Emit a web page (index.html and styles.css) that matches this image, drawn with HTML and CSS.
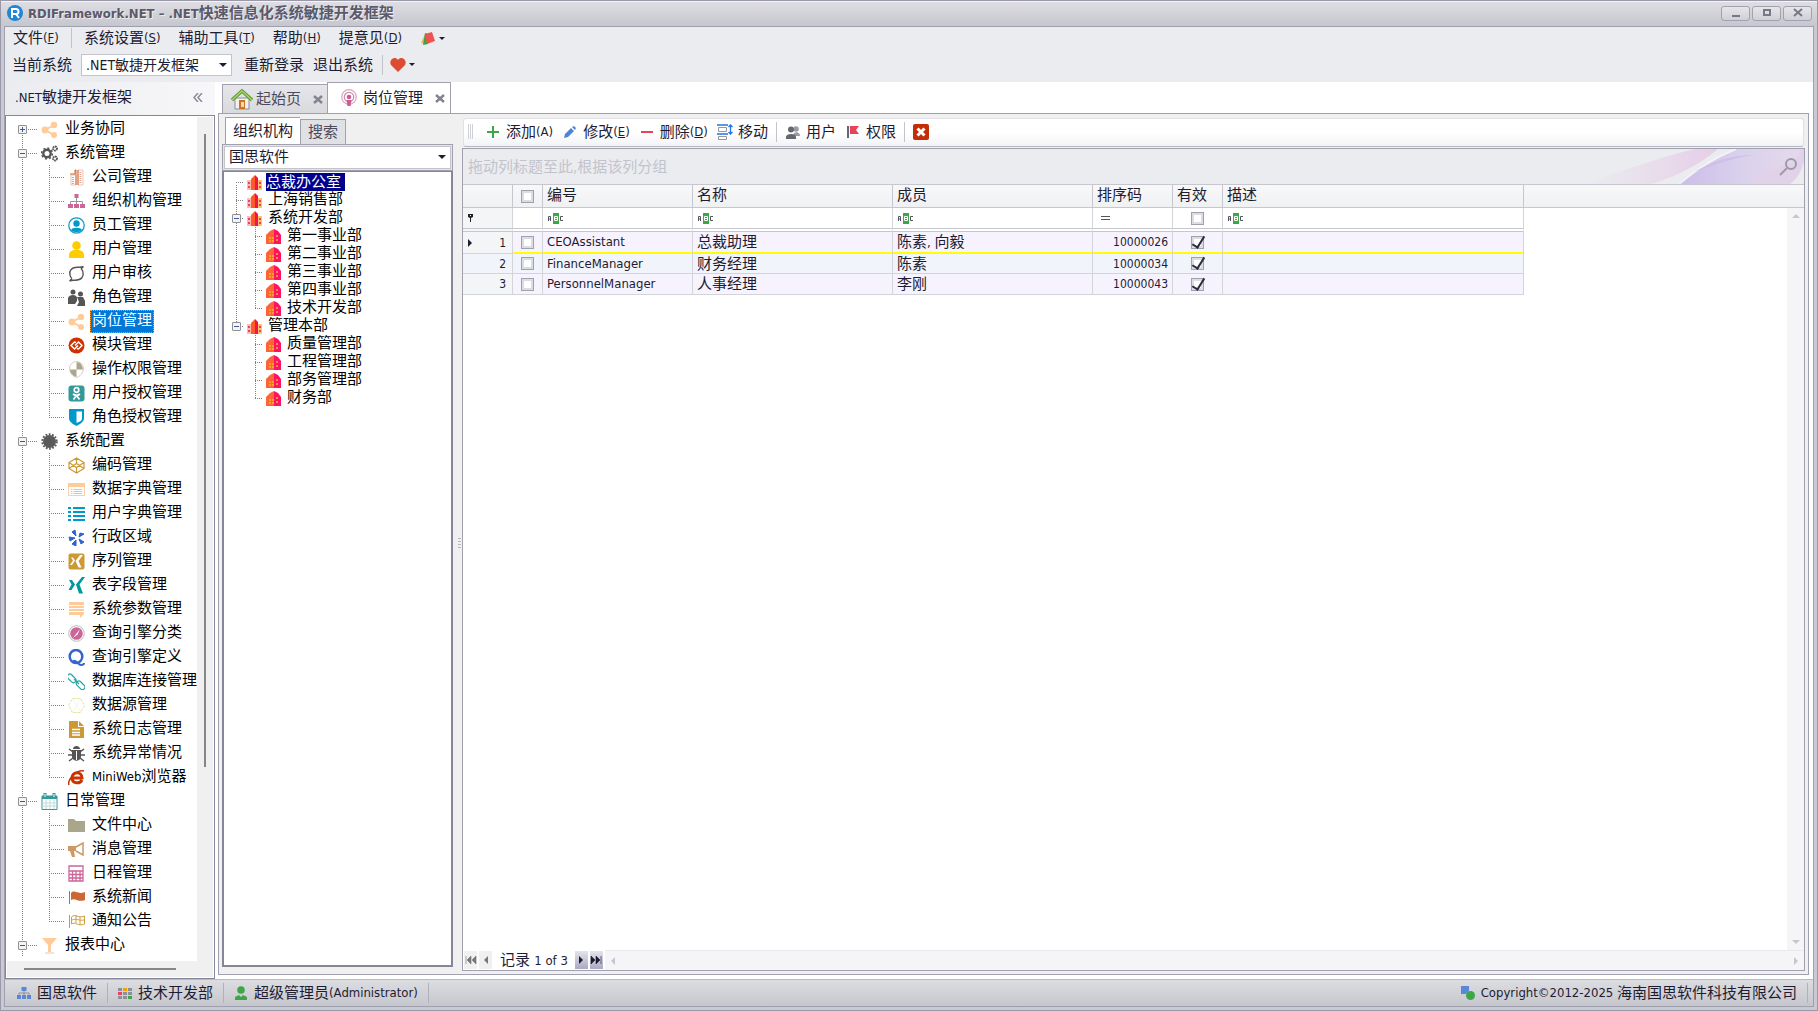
FILE: index.html
```
<!DOCTYPE html>
<html lang="zh-CN">
  <head>
    <meta charset="UTF-8" />
    <meta name="viewport" content="width=device-width, initial-scale=1.0" />
    <title>RDIFramework.NET - .NET快速信息化系统敏捷开发框架</title>
    <link rel="stylesheet" href="styles.css">
  </head>
  <body>
    <svg class="defs" aria-hidden="true">
      <symbol id="share" viewBox="0 0 17 17"><path d="M13 4 4 9l9 5" fill="none" stroke="#ffcb99" stroke-width="2"/><circle cx="13" cy="4" r="3.2" fill="#ffcb99"/><circle cx="4" cy="9" r="3.4" fill="#ffcb99"/><circle cx="13" cy="14" r="3" fill="#ffcb99"/></symbol>
      <symbol id="towers" viewBox="0 0 15 15"><path d="M0 5h4v10H0z" fill="#ffb9b4"/><path d="M4 4l4-4v15H4z" fill="#ff5a2c"/><path d="M8 0l3 3v12H8z" fill="#f0144b"/><path d="M11 5h4v10h-4z" fill="#ffc46b"/><path d="M2 7v2m0 2v2M13 7v2m0 2v2" stroke="#f0144b" stroke-width="1.500"/></symbol>
      <symbol id="house" viewBox="0 0 15 15"><path d="M0 6l4-4 4-2v15H0z" fill="#ff6434"/><path d="M8 0l4 2 3 4v9H8z" fill="#ff1262"/><path d="M4 8v2m3-2v2M4 11v2m3-2v2m4-7v2m0 2v2" stroke="#ffb02d" stroke-width="1.6"/></symbol>
      <symbol id="abc" viewBox="0 0 16 11"><path d="M5 0h6v11H5z" fill="#3fa648"/><path d="M.5 8V3.500h2V8m-2-2h2" fill="none" stroke="#555560"/><path d="M6.500 3.500h3v4h-3zm0 2h3" fill="none" stroke="#fff"/><path d="M15 3.500h-2.500v4H15" fill="none" stroke="#555560"/></symbol>
      <symbol id="cross" viewBox="0 0 10 9"><path d="M1 1l8 7M9 1 1 8" stroke="#83848f" stroke-width="2.500"/></symbol>
    </svg>

    <div class="window">
      <header class="titlebar">
        <svg class="logo" viewBox="0 0 16 16"><circle cx="8" cy="8" r="8" fill="#1f86d8"/><path d="M5 13V4h4a2.500 2.500 0 010 5H6m3 0 3 4" fill="none" stroke="#fff" stroke-width="2"/></svg>
        <h1><span class="en">RDIFramework.NET – .NET</span>快速信息化系统敏捷开发框架</h1>
        <div class="win-buttons">
          <button aria-label="最小化"><svg viewBox="0 0 12 10"><path d="M2 8h8" stroke="#777885" stroke-width="2"/></svg></button>
          <button aria-label="最大化"><svg viewBox="0 0 12 10"><path d="M3 2h6v5H3z" fill="none" stroke="#777885" stroke-width="2"/></svg></button>
          <button aria-label="关闭"><svg viewBox="0 0 12 10"><path d="M2 1l8 7M10 1 2 8" stroke="#777885" stroke-width="2"/></svg></button>
        </div>
      </header>

      <div class="client">
        <nav class="menubar">
          <button>文件<span class="en">(<u>F</u>)</span></button>
          <i class="sep"></i>
          <button>系统设置<span class="en">(<u>S</u>)</span></button>
          <button>辅助工具<span class="en">(<u>T</u>)</span></button>
          <button>帮助<span class="en">(<u>H</u>)</span></button>
          <button>提意见<span class="en">(<u>D</u>)</span></button>
          <button class="drop" aria-label="皮肤"><svg class="i16" viewBox="0 0 16 16"><path d="M5 4 1 13l5 1z" fill="#f2b84b"/><path d="M5 3l3 1v10l-5 1z" fill="#37a64a"/><path d="M5 4l7-2 3 9-8 3z" fill="#ef5350"/></svg><i class="caret"></i></button>
        </nav>

        <div class="systembar">
          <label for="system">当前系统</label>
          <span class="combo"><select id="system"><option>.NET敏捷开发框架</option></select></span>
          <button>重新登录</button>
          <button>退出系统</button>
          <i class="sep"></i>
          <button class="drop" aria-label="收藏"><svg class="i16" viewBox="0 0 16 16"><path d="M8 15 1 8C-1 4 2 1 5 1c1.500 0 2.500 1 3 2 .5-1 1.500-2 3-2 3 0 6 3 4 7z" fill="#dd4b33"/></svg><i class="caret"></i></button>
        </div>

        <div class="main">
          <aside class="sidebar">
            <div class="side-head">
              <h2><span class="en">.NET</span>敏捷开发框架</h2>
              <button aria-label="折叠"><svg viewBox="0 0 10 9"><path d="M5 0 1 4.500 5 9M9 0 5 4.500 9 9" fill="none" stroke="#8a8b98" stroke-width="1.500"/></svg></button>
            </div>
            <div class="side-box">
              <ul class="tree">
                <li>
                  <div class="node"><button class="toggle plus" aria-label="展开"></button><svg><use href="#share"/></svg><a href="#">业务协同</a></div>
                </li>
                <li>
                  <div class="node"><button class="toggle" aria-label="折叠"></button><svg viewBox="0 0 17 17"><circle cx="6" cy="8.500" r="3.700" fill="none" stroke="#555" stroke-width="2.400"/><circle cx="6" cy="8.500" r="5.400" fill="none" stroke="#555" stroke-width="1.500" stroke-dasharray="2 2.200"/><circle cx="14" cy="3.500" r="2" fill="none" stroke="#555" stroke-width="1.800" stroke-dasharray="1.600 .5"/><circle cx="14" cy="13.500" r="2" fill="none" stroke="#555" stroke-width="1.800" stroke-dasharray="1.600 .5"/></svg><a href="#">系统管理</a></div>
                  <ul>
                    <li><svg viewBox="0 0 17 17"><path d="M3 16V6h5v10zM10 1h5v15h-5z" fill="none" stroke="#f1c0b0"/><path d="M2 5h5V1h1v15M10 16V1" fill="none" stroke="#cc6633"/><path d="M5 8v7m7.500-12v12" stroke="#dda58d" stroke-width="2" stroke-dasharray="1 1"/></svg><a href="#">公司管理</a></li>
                    <li><svg viewBox="0 0 17 17"><path d="M8.500 5v6M2.500 11V8.500h12V11" fill="none" stroke="#999"/><path d="M6.500 1h4v4h-4zM0 11h5v4H0zM6 11h5v4H6zM12 11h5v4h-5z" fill="#cc6699"/></svg><a href="#">组织机构管理</a></li>
                    <li><svg viewBox="0 0 17 17"><circle cx="8.500" cy="8.500" r="7.700" fill="none" stroke="#0f9cc9" stroke-width="1.300"/><circle cx="8.500" cy="6.500" r="3.200" fill="#0099cc"/><path d="M3 13c1-3 10-3 11 0-3 3-8 3-11 0z" fill="#0099cc"/></svg><a href="#">员工管理</a></li>
                    <li><svg viewBox="0 0 17 17"><circle cx="8.500" cy="4.500" r="4.300" fill="#fc0"/><path d="M1 17v-3c0-7 15-7 15 0v3z" fill="#fc0"/></svg><a href="#">用户管理</a></li>
                    <li><svg viewBox="0 0 17 17"><path d="M15.500 1.500c-2 1-3 .8-5 .8C3 2 1 6 2 10c.3 2 1.300 3 2 3.500M1.500 16c2-1 3-.8 5-.8 7.500.3 9.500-4 8.500-8-.3-2-1.300-3-2-3.500M15.500 1.500 13 4M1.500 16 4 13.500" fill="none" stroke="#555" stroke-width="1.400"/></svg><a href="#">用户审核</a></li>
                    <li><svg viewBox="0 0 17 17"><circle cx="5" cy="3" r="2.500" fill="#555"/><path d="M0 15V9c1-4 9-4 9 0v3l-2 3z" fill="#555"/><circle cx="12.500" cy="5" r="2.500" fill="#555"/><path d="M9 8h6l2 4v5H9l2-4z" fill="#555"/></svg><a href="#">角色管理</a></li>
                    <li class="selected"><svg><use href="#share"/></svg><a href="#">岗位管理</a></li>
                    <li><svg viewBox="0 0 17 17"><circle cx="8.500" cy="8.500" r="8" fill="#cc3300"/><path d="M8 5.500 6.500 5 3 8.500 6.500 12 10 8.500M9 11.500l1.500.5L14 8.500 10.500 5 7 8.500" fill="none" stroke="#fff" stroke-width="1.500"/></svg><a href="#">模块管理</a></li>
                    <li><svg viewBox="0 0 17 17"><path d="M8.500.5C12 .5 15 3 15.500 7c0 5-4 9-7 9.500-3-.5-7-4.500-7-9.500C2 3 5 .5 8.500.5z" fill="#fff" stroke="#ddc8c8"/><path d="M8.500 1c4 0 6 3 6.500 7.500H8.500zM2 8.500h6.500V16C5 15 2 12 2 8.500z" fill="#aaa68c"/></svg><a href="#">操作权限管理</a></li>
                    <li><svg viewBox="0 0 17 17"><rect x=".5" y=".5" width="16" height="16" rx="3" fill="#339999"/><circle cx="8.500" cy="5" r="2.300" fill="none" stroke="#fff" stroke-width="1.700"/><path d="M5 9c2 1.500 5 1.500 7 0M8.500 10.500l-3 4m3-4 3 4" fill="none" stroke="#fff" stroke-width="1.800"/></svg><a href="#">用户授权管理</a></li>
                    <li><svg viewBox="0 0 17 17"><path d="M1 0h15v9c0 4-4 6-7.500 8C5 15 1 13 1 9z" fill="#0099cc"/><path d="M8.500 2.500H14V9c0 3-3 4-5.500 5z" fill="#fff"/></svg><a href="#">角色授权管理</a></li>
                  </ul>
                </li>
                <li>
                  <div class="node"><button class="toggle" aria-label="折叠"></button><svg viewBox="0 0 17 17"><circle cx="8.500" cy="8.500" r="6.500" fill="#5a5a5a"/><circle cx="8.500" cy="8.500" r="7.200" fill="none" stroke="#5a5a5a" stroke-width="2" stroke-dasharray="1.800 1.500"/></svg><a href="#">系统配置</a></div>
                  <ul>
                    <li><svg viewBox="0 0 17 17"><path d="M8.500 1 16 5.500v6L8.500 16 1 11.500v-6zM1 5.500l7.500 5 7.500-5M1 11.500l7.500-5 7.500 5M8.500 1v5.500m0 4V16" fill="none" stroke="#cc9933" stroke-width="1.200"/></svg><a href="#">编码管理</a></li>
                    <li><svg viewBox="0 0 17 17"><path d="M.5 2.500h16v12H.5z" fill="#fff" stroke="#f7cfae"/><path d="M0 2h17v4H0z" fill="#ffcb99"/><path d="M3 8.500h1.500m1 0H14m-11 2h1.500m1 0H14m-11 2h1.500m1 0H14" stroke="#dfc0b2"/></svg><a href="#">数据字典管理</a></li>
                    <li><svg viewBox="0 0 17 17"><path d="M0 3h3m2 0h12M0 7h3m2 0h12M0 11h3m2 0h12M0 15h3m2 0h12" stroke="#0099cc" stroke-width="2"/></svg><a href="#">用户字典管理</a></li>
                    <li><svg viewBox="0 0 17 17"><path d="M7 1l1 6-4-4zM16 5l-5 3 1-4zM1 8l6 1-5 3zM8 11v6l-4-2zM11 10l5 3-3 2z" fill="#2f62cf" stroke="#2f62cf"/></svg><a href="#">行政区域</a></li>
                    <li><svg viewBox="0 0 17 17"><rect x=".5" y=".5" width="16" height="16" rx="2" fill="#cc9933"/><path d="M3 4.500h2l2 3-3 4.500H2l3-4.500zM12 2h3l-4.500 6 3 6.500h-3L7.500 8z" fill="#fff"/></svg><a href="#">序列管理</a></li>
                    <li><svg viewBox="0 0 17 17"><path d="M1 3h3l3 4.500L3.500 13h-3l3-5.500zM14 0h3l-5.500 7.500 3.500 9h-4l-3-9z" fill="#009999"/></svg><a href="#">表字段管理</a></li>
                    <li><svg viewBox="0 0 17 17"><path d="M1 1h15v12l-4 4v-3H1z" fill="#ffcb99"/><path d="M1 4.500h15m-15 3h15m-15 3h15" stroke="#fff"/></svg><a href="#">系统参数管理</a></li>
                    <li><svg viewBox="0 0 17 17"><circle cx="8.500" cy="8.500" r="7.800" fill="#fff" stroke="#bbb"/><circle cx="8.500" cy="8.500" r="6.300" fill="#cc6699"/><path d="M5 13 12 4l-2.500 5.500z" fill="#fff"/></svg><a href="#">查询引擎分类</a></li>
                    <li><svg viewBox="0 0 17 17"><ellipse cx="8" cy="7.500" rx="6.300" ry="6.500" fill="none" stroke="#3366cc" stroke-width="2.500"/><path d="M5 12c3-2 5 4 8 4 2 0 3-1 3-2" fill="none" stroke="#3366cc" stroke-width="2"/></svg><a href="#">查询引擎定义</a></li>
                    <li><svg viewBox="0 0 17 17"><rect x="-1" y="3" width="10" height="5" rx="2.500" transform="rotate(45 4 5)" fill="none" stroke="#2aa5a5" stroke-width="1.300"/><rect x="8" y="10" width="10" height="5" rx="2.500" transform="rotate(45 13 12)" fill="none" stroke="#2aa5a5" stroke-width="1.300"/><path d="M6 6l5 5" stroke="#2aa5a5" stroke-width="1.300"/></svg><a href="#">数据库连接管理</a></li>
                    <li><svg viewBox="0 0 17 17"><path d="M4.500 1.500h8l4 7-4 7h-8l-4-7z" fill="none" stroke="#dfe79b" stroke-dasharray="3 1"/><path d="M4.500 1.500 13 15.500M12.500 1.500l-8 14" stroke="#f5efe3" stroke-width=".6"/></svg><a href="#">数据源管理</a></li>
                    <li><svg viewBox="0 0 17 17"><path d="M1 0h9v6h6v11H1z" fill="#cc9933"/><path d="M11 0l5 5h-5z" fill="#cc9933"/><path d="M4 8.500h8m-8 3h8m-8 2.500h8" stroke="#fff" stroke-width="1.300"/></svg><a href="#">系统日志管理</a></li>
                    <li><svg viewBox="0 0 17 17"><path d="M5 4c0-4 7-4 7 0zM4 5h9v7c-1 5-8 5-9 0z" fill="#555"/><path d="M1 4l4 3M0 10h5m-4 6 4-3M16 4l-4 3m5 3h-5m4 6-4-3" stroke="#555" stroke-width="1.500"/><path d="M8.500 6v9" stroke="#fff"/></svg><a href="#">系统异常情况</a></li>
                    <li><svg viewBox="0 0 17 17"><path d="M3 9h11c0-7-10-7-10 0 0 6 8 6 10 2" fill="none" stroke="#cc3300" stroke-width="3"/><path d="M1 16C-1 11 9 0 16 2" fill="none" stroke="#cc3300" stroke-width="1.500"/></svg><a href="#"><span class="en">MiniWeb</span>浏览器</a></li>
                  </ul>
                </li>
                <li>
                  <div class="node"><button class="toggle" aria-label="折叠"></button><svg viewBox="0 0 17 17"><path d="M1 3h15v13.500H1z" fill="#fff" stroke="#339999"/><path d="M1 3h15v3H1z" fill="#339999"/><path d="M4 0v4m9-4v4" stroke="#339999" stroke-width="3"/><path d="M4 1v3m9-3v3" stroke="#fff"/><path d="M1 10h15m-15 3h15M5 7v9m4-9v9m4-9v9" stroke="#bbdcdc"/></svg><a href="#">日常管理</a></div>
                  <ul>
                    <li><svg viewBox="0 0 17 17"><path d="M0 2h6l2 2h9v11H0z" fill="#aaa68c"/></svg><a href="#">文件中心</a></li>
                    <li><svg viewBox="0 0 17 17"><path d="M0 5h8v5H6l1 6H4l-2-6H0z" fill="#cc9966"/><path d="M8 6l7-4v12l-7-4" fill="none" stroke="#cc9966" stroke-width="1.500"/></svg><a href="#">消息管理</a></li>
                    <li><svg viewBox="0 0 17 17"><path d="M1 1h14v15H1zM1 6h14m-14 3.500h14M1 13h14M4.500 6v10M8 6v10m4-10v10" fill="none" stroke="#cc6699" stroke-width="1.300"/></svg><a href="#">日程管理</a></li>
                    <li><svg viewBox="0 0 17 17"><path d="M1.500 2v13" stroke="#cc6633"/><path d="M3 4c4-4 6 2 14-1v8c-7 3-10-3-14 0z" fill="#cc6633"/></svg><a href="#">系统新闻</a></li>
                    <li><svg viewBox="0 0 17 17"><path d="M1.500 2v13" stroke="#cc9933"/><path d="M3.500 4c4-4 6 2 13-1v8c-7 3-9-3-13 0zM4 7c4-2 7 1 12 0M8 2v8m4-6v8" fill="none" stroke="#cca040"/></svg><a href="#">通知公告</a></li>
                  </ul>
                </li>
                <li>
                  <div class="node"><button class="toggle" aria-label="折叠"></button><svg viewBox="0 0 17 17"><path d="M1 1h15L10 8v7H7V8z" fill="#ffcb99"/><path d="M4 16h9" stroke="#e8c9ae"/></svg><a href="#">报表中心</a></div>
                </li>
              </ul>
              <div class="vbar"><i></i></div>
              <div class="hbar"><i></i></div>
            </div>
          </aside>

          <section class="document">
            <div class="doc-tabs">
              <button class="doc-tab">
                <svg class="pic" viewBox="0 0 22 22"><path d="M4 10h14v11H4z" fill="#f8efe0" stroke="#7b91b5"/><path d="M1 12 11 3l10 9" fill="none" stroke="#5b9a30" stroke-width="3.500"/><path d="M1 12 11 3l10 9" fill="none" stroke="#a7d56c" stroke-width="1.500"/><path d="M8 12h6v9H8z" fill="#c9742b"/><path d="M10 14h3v5h-3z" fill="#f5d9a8"/></svg>
                起始页<svg class="x"><use href="#cross"/></svg>
              </button>
              <button class="doc-tab active">
                <svg class="pic" viewBox="0 0 22 22"><circle cx="11" cy="10" r="7.300" fill="none" stroke="#dba3c0" stroke-width="1.200"/><circle cx="11" cy="10" r="4.700" fill="none" stroke="#d389ad" stroke-width="1.300"/><circle cx="11" cy="10" r="2.300" fill="#cc5c92"/><path d="M8.500 13h5L12.500 19h-3z" fill="#cc5c92"/></svg>
                岗位管理<svg class="x"><use href="#cross"/></svg>
              </button>
            </div>

            <div class="page">
              <div class="org">
                <div class="org-tabs">
                  <button class="active">组织机构</button>
                  <button>搜索</button>
                </div>
                <div class="org-combo"><span class="combo"><select aria-label="公司"><option>国思软件</option></select></span></div>
                <ul class="tree small">
                  <li class="selected"><div class="node"><svg><use href="#towers"/></svg><a href="#">总裁办公室</a></div></li>
                  <li><div class="node"><svg><use href="#towers"/></svg><a href="#">上海销售部</a></div></li>
                  <li>
                    <div class="node"><button class="toggle" aria-label="折叠"></button><svg><use href="#towers"/></svg><a href="#">系统开发部</a></div>
                    <ul>
                      <li><svg><use href="#house"/></svg><a href="#">第一事业部</a></li>
                      <li><svg><use href="#house"/></svg><a href="#">第二事业部</a></li>
                      <li><svg><use href="#house"/></svg><a href="#">第三事业部</a></li>
                      <li><svg><use href="#house"/></svg><a href="#">第四事业部</a></li>
                      <li><svg><use href="#house"/></svg><a href="#">技术开发部</a></li>
                    </ul>
                  </li>
                  <li class="end">
                    <div class="node"><button class="toggle" aria-label="折叠"></button><svg><use href="#towers"/></svg><a href="#">管理本部</a></div>
                    <ul>
                      <li><svg><use href="#house"/></svg><a href="#">质量管理部</a></li>
                      <li><svg><use href="#house"/></svg><a href="#">工程管理部</a></li>
                      <li><svg><use href="#house"/></svg><a href="#">部务管理部</a></li>
                      <li><svg><use href="#house"/></svg><a href="#">财务部</a></li>
                    </ul>
                  </li>
                </ul>
              </div>

              <div class="splitter"><i></i></div>

              <div class="work">
                <div class="toolbar">
                  <i class="grip"></i>
                  <button><svg class="i16" viewBox="0 0 16 16"><path d="M8 2v12M2 8h12" stroke="#3fa648" stroke-width="2"/></svg>添加<span class="en">(A)</span></button>
                  <button><svg class="i16" viewBox="0 0 16 16"><path d="M2 14l1-4 6-6 3 3-6 6zM10 3l2-1 2 2-1 2z" fill="#4f83d6"/></svg>修改<span class="en">(<u>E</u>)</span></button>
                  <button><svg class="i16" viewBox="0 0 16 16"><path d="M2 8h12" stroke="#e8435a" stroke-width="2"/></svg>删除<span class="en">(<u>D</u>)</span></button>
                  <button><svg class="i16" viewBox="0 0 16 16"><path d="M0 1h11M0 10h11" stroke="#2472e8" stroke-width="1.500"/><path d="M1.500 3.500h8v4h-8zm0 9h8v3h-8z" fill="none" stroke="#999"/><path d="M13.500 1v9m-2-7 2-2 2 2m-4 5 2 2 2-2" fill="none" stroke="#2472e8" stroke-width="1.300"/></svg>移动</button>
                  <i class="sep"></i>
                  <button><svg class="i16" viewBox="0 0 16 16"><circle cx="11" cy="5" r="2.800" fill="#999aa3"/><path d="M8 12c0-5 7-5 7 0z" fill="#999aa3"/><circle cx="6" cy="5.500" r="3" fill="#65666e"/><path d="M1 15v-2c0-4 10-4 10 0v2z" fill="#65666e"/></svg>用户</button>
                  <button><svg class="i16" viewBox="0 0 16 16"><path d="M3 2v12" stroke="#65666e" stroke-width="2"/><path d="M5 2h9l-3 4 3 4H5z" fill="#e8435a"/></svg>权限</button>
                  <i class="sep"></i>
                  <button aria-label="关闭"><svg class="i16" viewBox="0 0 16 16"><rect width="16" height="16" rx="2" fill="#c42e06"/><path d="M4.500 4.500l7 7m0-7-7 7" stroke="#fff" stroke-width="3"/></svg></button>
                </div>

                <div class="grid">
                  <div class="group-panel">
                    拖动列标题至此,根据该列分组
                    <svg class="swoosh" viewBox="0 0 240 35"><defs><linearGradient id="pk"><stop offset="0" stop-color="#e6cfe8" stop-opacity="0"/><stop offset="1" stop-color="#e6c6e6"/></linearGradient><linearGradient id="vi"><stop offset="0" stop-color="#c4b2ea"/><stop offset=".5" stop-color="#d6cbec"/><stop offset="1" stop-color="#e6d5ea"/></linearGradient></defs><path d="M20 35Q90 10 130 0h24Q128 22 88 35z" fill="url(#pk)"/><path d="M115 35Q142 12 172 0h68v12q-4 16-14 23z" fill="url(#vi)"/><path d="M115 35Q142 12 172 0" fill="none" stroke="#f5f4fa" stroke-width="2"/><path d="M130 23Q160 6 190 6q-20 2-60 17z" fill="#c6b4e9"/><path d="M185 35q15-13 32-17t19-18h4v12q-4 16-14 23z" fill="#dfcce8"/></svg>
                    <button aria-label="查找"><svg viewBox="0 0 20 20"><circle cx="13" cy="7" r="5" fill="none" stroke="#9b9ba8" stroke-width="2"/><path d="M9 11l-7 7" stroke="#9b9ba8" stroke-width="2"/></svg></button>
                  </div>

                  <div class="grid-body">
                    <table>
                      <colgroup><col class="c-ind"><col class="c-chk"><col class="c-code"><col class="c-name"><col class="c-name"><col class="c-sort"><col class="c-on"><col class="c-desc"><col></colgroup>
                      <thead>
                        <tr><th></th><th class="mid"><input type="checkbox" aria-label="全选"></th><th>编号</th><th>名称</th><th>成员</th><th>排序码</th><th>有效</th><th>描述</th><th></th></tr>
                      </thead>
                      <tbody>
                        <tr class="filter"><td><svg viewBox="0 0 8 10"><path d="M1 1h5v3L4 5v4H3V5L1 4z" fill="#222"/><path d="M3 2h1v1H3z" fill="#fff"/></svg></td><td></td><td><svg class="abc"><use href="#abc"/></svg></td><td><svg class="abc"><use href="#abc"/></svg></td><td><svg class="abc"><use href="#abc"/></svg></td><td><svg class="eq" viewBox="0 0 9 5"><path d="M0 .5h9M0 3.500h9" stroke="#555560"/></svg></td><td class="mid"><input type="checkbox" aria-label="筛选有效"></td><td><svg class="abc"><use href="#abc"/></svg></td><td></td></tr>
                        <tr class="current"><td class="num"><i class="arrow"></i>1</td><td class="mid"><input type="checkbox" aria-label="选择1"></td><td class="en">CEOAssistant</td><td>总裁助理</td><td>陈素<span class="en">, </span>向毅</td><td class="num">10000026</td><td class="mid"><input type="checkbox" aria-label="有效1" checked></td><td></td><td></td></tr>
                        <tr class="even"><td class="num">2</td><td class="mid"><input type="checkbox" aria-label="选择2"></td><td class="en">FinanceManager</td><td>财务经理</td><td>陈素</td><td class="num">10000034</td><td class="mid"><input type="checkbox" aria-label="有效2" checked></td><td></td><td></td></tr>
                        <tr><td class="num">3</td><td class="mid"><input type="checkbox" aria-label="选择3"></td><td class="en">PersonnelManager</td><td>人事经理</td><td>李刚</td><td class="num">10000043</td><td class="mid"><input type="checkbox" aria-label="有效3" checked></td><td></td><td></td></tr>
                      </tbody>
                    </table>
                    <div class="grid-vbar"><i class="up"></i><i class="down"></i></div>
                  </div>

                  <div class="navigator">
                    <button disabled aria-label="首条"><svg viewBox="0 0 12 8"><path d="M1 0v8M6 0 2 4l4 4zM11 0 7 4l4 4z" fill="#777" stroke="#777" stroke-width=".6"/></svg></button>
                    <button disabled aria-label="上一条"><svg viewBox="0 0 12 8"><path d="M8 0 4 4l4 4z" fill="#777"/></svg></button>
                    <span class="record">记录 <span class="en">1 of 3</span></span>
                    <button aria-label="下一条"><svg viewBox="0 0 12 8"><path d="M4 0l4 4-4 4z" fill="#1c1c30"/></svg></button>
                    <button aria-label="末条"><svg viewBox="0 0 12 8"><path d="M1 0l4 4-4 4zM6 0l4 4-4 4zM11 0v8" fill="#1c1c30" stroke="#1c1c30" stroke-width=".6"/></svg></button>
                    <div class="grid-hbar"><i class="left"></i><i class="right"></i></div>
                  </div>
                </div>
              </div>
            </div>
          </section>
        </div>

        <footer class="statusbar">
          <span><svg class="i14" viewBox="0 0 14 14"><path d="M4.500 1h5v4h-5zM0 9h4v4H0zM5 9h4v4H5zM10 9h4v4h-4z" fill="#5b87d6"/><path d="M7 5v4M2 9V7h10v2" fill="none" stroke="#8e9098"/></svg>国思软件</span>
          <i class="sep"></i>
          <span><svg class="i14" viewBox="0 0 14 14"><path d="M0 2h4v3H0zm10 0h4v3h-4zM5 6h4v3H5zm5 0h4v3h-4zM0 10h4v3H0zm5 0h4v3H5z" fill="#8e9098"/><path d="M5 2h4v3H5z" fill="#f5a000"/><path d="M0 6h4v3H0z" fill="#e8435a"/><path d="M10 10h4v3h-4z" fill="#3fa648"/></svg>技术开发部</span>
          <i class="sep"></i>
          <span><svg class="i14" viewBox="0 0 14 14"><circle cx="7" cy="4" r="3.800" fill="#3fa648"/><path d="M1 14v-3l4-2 2 2 2-2 4 2v3z" fill="#3fa648"/></svg>超级管理员<span class="en">(Administrator)</span></span>
          <i class="sep"></i>
          <span class="copy"><svg class="i14" viewBox="0 0 14 14"><path d="M0 0h8v5L5 8H0z" fill="#5b87d6"/><circle cx="9.500" cy="9.500" r="4.500" fill="#3fa648"/></svg><span class="en">Copyright©2012-2025 </span>海南国思软件科技有限公司</span>
          <i class="sep"></i>
        </footer>
      </div>
    </div>
  </body>
</html>
```
FILE: styles.css
```
* {
  box-sizing: border-box;
}

body {
  margin: 0;
  font-family: "DejaVu Sans Condensed", "Noto Sans CJK SC", sans-serif;
  font-size: 15px;
  line-height: 18px;
  color: #1e1c32;
}

button {
  font: inherit;
  color: inherit;
  background: none;
  border: 0;
  padding: 0;
  display: flex;
  align-items: center;
  white-space: nowrap;
}

a {
  color: #000;
  text-decoration: none;
}

h1,
h2 {
  margin: 0;
  font-size: 15px;
  font-weight: normal;
}

svg {
  flex: none;
  display: block;
}

.defs {
  position: absolute;
  width: 0;
  height: 0;
}

.en {
  font-size: 13px;
  white-space: pre;
}

.i16 {
  width: 16px;
  height: 16px;
}

.i14 {
  width: 14px;
  height: 14px;
}

.sep {
  flex: none;
  width: 1px;
  height: 20px;
  background: #c3c3cc;
}

/* window frame */
.window {
  height: 100vh;
  display: flex;
  flex-direction: column;
  padding: 0 3px 3px;
  border: 1px solid #9a99aa;
  background: #c9c9d3;
}

.titlebar {
  display: flex;
  align-items: center;
  height: 25px;
  margin: 0 -3px;
  padding: 0 5px 2px 6px;
  background: linear-gradient(#dddde2, #c6c6cf);
  border-top: 1px solid #f3f3f6;
}

.titlebar .logo {
  width: 16px;
  height: 16px;
  margin-right: 5px;
}

.titlebar h1 {
  flex: 1;
  font-weight: bold;
  color: #5b5a6b;
  text-shadow: 1px 1px 0 #eeeef2;
}

.win-buttons {
  display: flex;
  gap: 2px;
}

.win-buttons button {
  width: 29px;
  height: 15px;
  justify-content: center;
  border: 1px solid #a2a2ae;
  border-radius: 3px;
  background: linear-gradient(#e6e6ea, #cfcfd7);
}

.win-buttons svg {
  width: 12px;
  height: 10px;
}

.client {
  flex: 1;
  min-height: 0;
  display: flex;
  flex-direction: column;
  border: 1px solid #9f9fad;
  background: #ebecf0;
}

/* menu and system rows */
.menubar {
  display: flex;
  align-items: center;
  gap: 18px;
  height: 24px;
  padding: 0 8px 2px;
}

.menubar .sep {
  margin: 0 -6px;
}

.caret {
  margin-left: 3px;
  border: 3px solid transparent;
  border-top-color: #1e1c32;
  border-bottom: 0;
}

.systembar {
  display: flex;
  align-items: center;
  gap: 9px;
  height: 31px;
  padding: 0 7px 4px;
}

.systembar .combo {
  width: 151px;
  margin-right: 3px;
}

.systembar .sep {
  margin-right: -2px;
}

.combo {
  position: relative;
  display: block;
}

.combo select {
  appearance: none;
  display: block;
  width: 100%;
  height: 22px;
  padding: 0 16px 0 4px;
  border: 1px solid #c3c3cc;
  border-radius: 0;
  background: #fff;
  color: #1e1c32;
  font-family: inherit;
  font-size: 14px;
}

.combo::after {
  content: "";
  position: absolute;
  right: 5px;
  top: 9px;
  border: 4px solid transparent;
  border-top-color: #1e1c32;
  border-bottom: 0;
  pointer-events: none;
}

/* left navigation */
.main {
  flex: 1;
  min-height: 0;
  display: flex;
  background: #fff;
}

.sidebar {
  flex: none;
  width: 210px;
  display: flex;
  flex-direction: column;
}

.side-head {
  display: flex;
  align-items: center;
  justify-content: space-between;
  height: 33px;
  padding: 0 12px 2px 10px;
  background: linear-gradient(90deg, #ebecf0, #f7f7f9);
}

.side-head svg {
  width: 10px;
  height: 9px;
}

.side-box {
  flex: 1;
  min-height: 0;
  display: grid;
  grid-template-columns: 1fr 16px;
  grid-template-rows: 1fr 16px;
  padding: 1px;
  border: 1px solid #85869a;
  background: #fff;
}

.vbar,
.hbar {
  background: #f0f0f0;
}

.vbar i {
  display: block;
  width: 2px;
  height: 75%;
  margin: 17px 7px;
  background: #868686;
}

.hbar {
  grid-column: 1 / 3;
}

.hbar i {
  display: block;
  width: 152px;
  height: 2px;
  margin: 7px 17px;
  background: #868686;
}

/* trees */
.tree,
.tree ul {
  list-style: none;
  margin: 0;
  padding: 0;
}

.tree {
  --row: 24px;
  --icon: 17px;
  --trunk: 15px;
  --root: 34px;
  --stem: 42px;
  --child: 61px;
  --gap: 7px;
  overflow: hidden;
  white-space: nowrap;
}

.tree.small {
  --row: 18px;
  --icon: 15px;
  --trunk: 12px;
  --root: 23px;
  --stem: 31px;
  --child: 42px;
  --gap: 6px;
}

.tree > li {
  background: repeating-linear-gradient(#808080 0 1px, transparent 1px 2px) no-repeat var(--trunk) 0 / 1px 100%;
}

.tree > li:first-child {
  background-position: var(--trunk) 12px;
}

.tree > li.end {
  background-size: 1px 9px;
}

.tree .node,
.tree ul li {
  display: flex;
  align-items: center;
  height: var(--row);
}

.tree .node {
  position: relative;
  padding-left: var(--root);
  background: repeating-linear-gradient(90deg, #808080 0 1px, transparent 1px 2px) no-repeat var(--trunk) 50% / calc(var(--root) - var(--trunk) - 4px) 1px;
}

.tree ul li {
  padding-left: var(--child);
  background:
    repeating-linear-gradient(#808080 0 1px, transparent 1px 2px) no-repeat var(--stem) 0 / 1px 100%,
    repeating-linear-gradient(90deg, #808080 0 1px, transparent 1px 2px) no-repeat var(--stem) 50% / calc(var(--child) - var(--stem) - 4px) 1px;
}

.tree ul li:last-child {
  background-size: 1px 50%, calc(var(--child) - var(--stem) - 4px) 1px;
}

.tree svg {
  width: var(--icon);
  height: var(--icon);
  margin-right: var(--gap);
}

.tree a {
  padding-bottom: 2px;
}

.tree .selected a {
  margin-left: -2px;
  padding: 0 1px 3px;
  border: 1px dotted #ff9a30;
  background: #0078d7;
  color: #fff;
}

.tree.small .selected a {
  padding: 0 4px 0 0;
  border: 0;
  background: #00008b;
}

/* sits on the trunk line of the tree */
.toggle {
  position: absolute;
  left: calc(var(--trunk) - 4px);
  width: 9px;
  height: 9px;
  border: 1px solid #919191;
  border-radius: 1px;
  background: linear-gradient(#3c5a9c, #3c5a9c) no-repeat center / 5px 1px #f4f4f4;
}

.toggle.plus {
  background:
    linear-gradient(#3c5a9c, #3c5a9c) no-repeat center / 5px 1px,
    linear-gradient(#3c5a9c, #3c5a9c) no-repeat center / 1px 5px,
    #f4f4f4;
}

/* document area */
.document {
  flex: 1;
  min-width: 0;
  display: flex;
  flex-direction: column;
  padding: 0 4px 4px 3px;
}

.doc-tabs {
  display: flex;
  align-items: flex-end;
  height: 32px;
  padding-left: 4px;
  margin-bottom: -1px;
}

.doc-tab {
  height: 30px;
  padding: 0 4px 0 8px;
  border: 1px solid #a0a0ae;
  background: linear-gradient(#e6e6ea, #d9dade);
  color: #4c4b5c;
}

.doc-tab.active {
  height: 32px;
  margin-left: -1px;
  padding: 0 5px 1px 10px;
  border-bottom-color: #fff;
  background: #fff;
  color: #1e1c32;
}

.doc-tab .pic {
  width: 22px;
  height: 22px;
  margin-right: 3px;
}

.doc-tab .x {
  width: 10px;
  height: 9px;
  margin: 1px 0 0 12px;
}

.page {
  flex: 1;
  min-height: 0;
  display: flex;
  padding: 3px;
  border: 1px solid #a0a0ae;
  background: #f0f0f0;
}

.org {
  flex: none;
  width: 231px;
  display: flex;
  flex-direction: column;
  margin-bottom: 4px;
}

.org-tabs {
  display: flex;
  align-items: flex-end;
  height: 27px;
  padding-left: 3px;
}

.org-tabs button {
  height: 25px;
  padding: 0 7px;
  border: 1px solid #a0a0ae;
  border-bottom: 0;
  background: #e0e1e5;
  color: #4c4b5c;
}

.org-tabs .active {
  height: 27px;
  border-right: 0;
  background: #fff;
  color: #1e1c32;
}

.org-combo {
  padding: 1px;
  border: 1px solid #a0a0ae;
  background: #e4e5ea;
}

.org-combo .combo select {
  height: 23px;
  padding-bottom: 2px;
  font-size: 15px;
}

.tree.small {
  flex: 1;
  padding-top: 1px;
  border: 2px solid #85869a;
  border-top-width: 1px;
  background: #fff;
}

.splitter {
  flex: none;
  width: 9px;
  display: flex;
  align-items: center;
  justify-content: center;
  padding-left: 4px;
}

.splitter i {
  width: 3px;
  height: 12px;
  background: repeating-linear-gradient(#b4b4bf 0 1px, transparent 1px 3px);
}

.work {
  flex: 1;
  min-width: 0;
  display: flex;
  flex-direction: column;
  gap: 1px;
}

.toolbar {
  display: flex;
  align-items: center;
  gap: 9px;
  height: 29px;
  margin: 1px 1px 0;
  padding: 0 4px 2px;
  border: 1px solid #e0e0e6;
  border-bottom-color: #b7b7c2;
  border-radius: 3px;
  background: linear-gradient(#fff 50%, #f2f3f6);
}

.toolbar .sep {
  margin: 0 -1px;
}

.toolbar svg {
  margin-right: 5px;
}

.grip {
  width: 5px;
  height: 15px;
  margin-right: 3px;
  background: repeating-linear-gradient(90deg, #d0d0d8 0 1px, transparent 1px 2px);
}

/* data grid */
.grid {
  flex: 1;
  min-height: 0;
  display: flex;
  flex-direction: column;
  border: 1px solid #a0a0ae;
  background: #fff;
}

.group-panel {
  position: relative;
  display: flex;
  align-items: center;
  justify-content: space-between;
  height: 36px;
  padding: 0 6px 0 5px;
  border-bottom: 1px solid #c6c6ce;
  background: #ebecf0;
  color: #c3c3cc;
}

.group-panel button {
  position: relative;
}

.group-panel button svg {
  width: 20px;
  height: 20px;
}

.swoosh {
  position: absolute;
  right: 0;
  top: 0;
  width: 240px;
  height: 35px;
  opacity: 0.8;
}

.grid-body {
  position: relative;
  flex: 1;
}

table {
  width: 100%;
  table-layout: fixed;
  border-collapse: separate;
  border-spacing: 0;
}

.c-ind {
  width: 50px;
}

.c-chk {
  width: 30px;
}

.c-code {
  width: 150px;
}

.c-name {
  width: 200px;
}

.c-sort {
  width: 80px;
}

.c-on {
  width: 50px;
}

.c-desc {
  width: 301px;
}

th,
td {
  height: 21px;
  padding: 0 4px;
  border-right: 1px solid #d3d3da;
  border-bottom: 1px solid #d3d3da;
  text-align: left;
  font-weight: normal;
  line-height: 18px;
  white-space: nowrap;
}

th {
  height: 23px;
  padding-bottom: 2px;
  border-color: #c6c6ce;
  background: linear-gradient(#f8f8f9, #f0f1f3);
}

td {
  background: #f7f3fe;
}

td:first-child {
  background: #f4f5f7;
}

.even td {
  background: #f1f5fb;
}

.filter td {
  height: 24px;
  border-bottom: 4px double #c6c6ce;
  background: #fff;
}

.filter td:first-child {
  background: #f4f5f7;
}

.filter svg {
  width: 8px;
  height: 10px;
}

.filter .abc {
  width: 16px;
  height: 11px;
  margin-left: 1px;
}

.filter .eq {
  width: 9px;
  height: 5px;
  margin-left: 4px;
}

.current td {
  height: 22px;
}

.current td:not(:first-child) {
  border-bottom: 2px solid #ff0;
}

.even td {
  height: 20px;
}

tr th:last-child,
tr td:last-child,
.current td:last-child:not(:first-child) {
  border-right: 0;
}

tbody tr td:last-child,
.current td:last-child:not(:first-child) {
  border-bottom: 0;
  background: #fff;
}

td.en {
  font-size: 13px;
}

.num {
  font-size: 12px;
  text-align: right;
}

td.num:first-child {
  padding-right: 6px;
}

.arrow {
  float: left;
  margin: 5px 0 0 1px;
  border: 4px solid transparent;
  border-left-color: #1e1c32;
  border-right: 0;
}

th.mid,
td.mid {
  padding: 0;
  text-align: center;
}

input[type="checkbox"] {
  appearance: none;
  position: relative;
  display: block;
  width: 13px;
  height: 13px;
  margin: 0 auto;
  border: 1px solid #a0a0ae;
  background: #fff;
  box-shadow: inset 0 0 0 2px #dcdde3;
}

input[type="checkbox"]:checked::after {
  content: "";
  position: absolute;
  left: 3px;
  top: -3px;
  width: 5px;
  height: 12px;
  border: solid #2c2b40;
  border-width: 0 2px 2px 0;
  transform: rotate(32deg);
}

/* lies over the right edge of the table, below its header */
.grid-vbar {
  position: absolute;
  top: 23px;
  right: 0;
  bottom: 0;
  display: flex;
  flex-direction: column;
  justify-content: space-between;
  align-items: center;
  width: 17px;
  padding: 6px 0;
  background: #f5f5f7;
}

.up,
.down,
.left,
.right {
  border: 4px solid transparent;
}

.up {
  border-top: 0;
  border-bottom-color: #c6c6ce;
}

.down {
  border-bottom: 0;
  border-top-color: #c6c6ce;
}

.left {
  border-left: 0;
  border-right-color: #c6c6ce;
}

.right {
  border-right: 0;
  border-left-color: #c6c6ce;
}

.navigator {
  display: flex;
  align-items: center;
  gap: 2px;
  height: 20px;
  padding-left: 1px;
}

.navigator button {
  width: 13px;
  height: 18px;
  justify-content: center;
  background: linear-gradient(#e4e4ec, #aaa8c2);
}

.navigator button:disabled {
  background: #f0f0f0;
}

.navigator svg {
  width: 12px;
  height: 8px;
}

.record {
  padding: 0 5px 0 6px;
}

.grid-hbar {
  flex: 1;
  display: flex;
  align-items: center;
  justify-content: space-between;
  height: 20px;
  padding: 0 6px;
  border-top: 1px solid #e9e9ee;
  background: #f5f5f7;
}

/* status bar */
.statusbar {
  display: flex;
  align-items: center;
  gap: 10px;
  height: 27px;
  padding: 0 5px 0 12px;
  border-top: 1px solid #b9b9c4;
  background: linear-gradient(#dcdde1, #c6c7cd);
}

.statusbar > span {
  display: flex;
  align-items: center;
}

.statusbar svg {
  margin-right: 6px;
}

.statusbar .sep {
  background: #b0b1bb;
}

.statusbar .copy {
  margin-left: auto;
}
```
